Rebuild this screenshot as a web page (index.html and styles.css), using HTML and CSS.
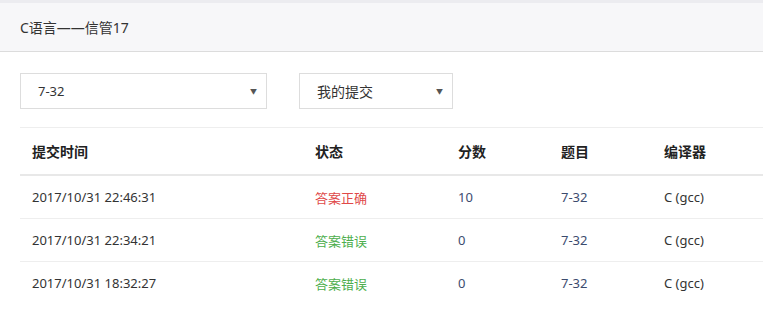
FILE: index.html
```html
<!DOCTYPE html>
<html>
<head>
  <title>提交列表</title>
  <link rel="stylesheet" href="styles.css">
</head>
<body>
  <div class="header">
    <h1>C语言——信管17</h1>
  </div>

  <div class="content">
    <div class="filters">
      <div class="select select-problem">
        <span>7-32</span>
        <span class="arrow">▼</span>
      </div>
      <div class="select select-user">
        <span>我的提交</span>
        <span class="arrow">▼</span>
      </div>
    </div>

    <table class="submissions">
      <thead>
        <tr>
          <th class="col-time">提交时间</th>
          <th class="col-status">状态</th>
          <th class="col-score">分数</th>
          <th class="col-problem">题目</th>
          <th class="col-compiler">编译器</th>
        </tr>
      </thead>
      <tbody>
        <tr>
          <td>2017/10/31 22:46:31</td>
          <td class="accepted">答案正确</td>
          <td class="link">10</td>
          <td class="link">7-32</td>
          <td>C (gcc)</td>
        </tr>
        <tr>
          <td>2017/10/31 22:34:21</td>
          <td class="wrong">答案错误</td>
          <td class="link">0</td>
          <td class="link">7-32</td>
          <td>C (gcc)</td>
        </tr>
        <tr>
          <td>2017/10/31 18:32:27</td>
          <td class="wrong">答案错误</td>
          <td class="link">0</td>
          <td class="link">7-32</td>
          <td>C (gcc)</td>
        </tr>
      </tbody>
    </table>
  </div>
</body>
</html>
```

FILE: styles.css
```css
body {
  margin: 0;
  padding: 0;
  font-family: "Noto Sans", "Noto Sans CJK SC", sans-serif;
  color: #333;
  background: #fff;
}

.header {
  border-top: 3px solid #ececf0;
  background-color: #f7f7f9;
  border-bottom: 1px solid #dcdcdc;
  height: 48px;
  padding-left: 20px;
}

.header h1 {
  margin: 0;
  font-size: 14px;
  font-weight: normal;
  line-height: 50px;
  color: #333;
}

.content {
  padding: 21px 0 0 20px;
}

.filters {
  display: flex;
  gap: 32px;
  margin-bottom: 18px;
}

.select {
  height: 34px;
  border: 1px solid #ddd;
  display: flex;
  align-items: center;
  justify-content: space-between;
  padding: 0 9px 0 17px;
  font-size: 13px;
  color: #333;
  box-sizing: content-box;
}

.select-problem {
  width: 219px;
}

.select-user {
  width: 126px;
}

.select-user span:first-child {
  font-size: 14px;
}

.arrow {
  font-size: 7px;
  color: #555;
}

.submissions {
  width: 100%;
  border-collapse: collapse;
  font-size: 13px;
  border-top: 1px solid #eee;
}

.submissions th,
.submissions td {
  text-align: left;
  padding: 0 0 0 12px;
}

.submissions th {
  height: 46px;
  font-weight: bold;
  font-size: 14px;
  color: #222;
  border-bottom: 2px solid #e8e8e8;
}

.submissions td {
  height: 42px;
  border-bottom: 1px solid #eee;
}

.submissions tbody tr:last-child td {
  border-bottom: none;
}

.col-time { width: 271px; }
.col-status { width: 131px; }
.col-score { width: 91px; }
.col-problem { width: 91px; }

.accepted { color: #e04848; }
.wrong { color: #4cae4c; }
.link { color: #3c4b6e; }
```
